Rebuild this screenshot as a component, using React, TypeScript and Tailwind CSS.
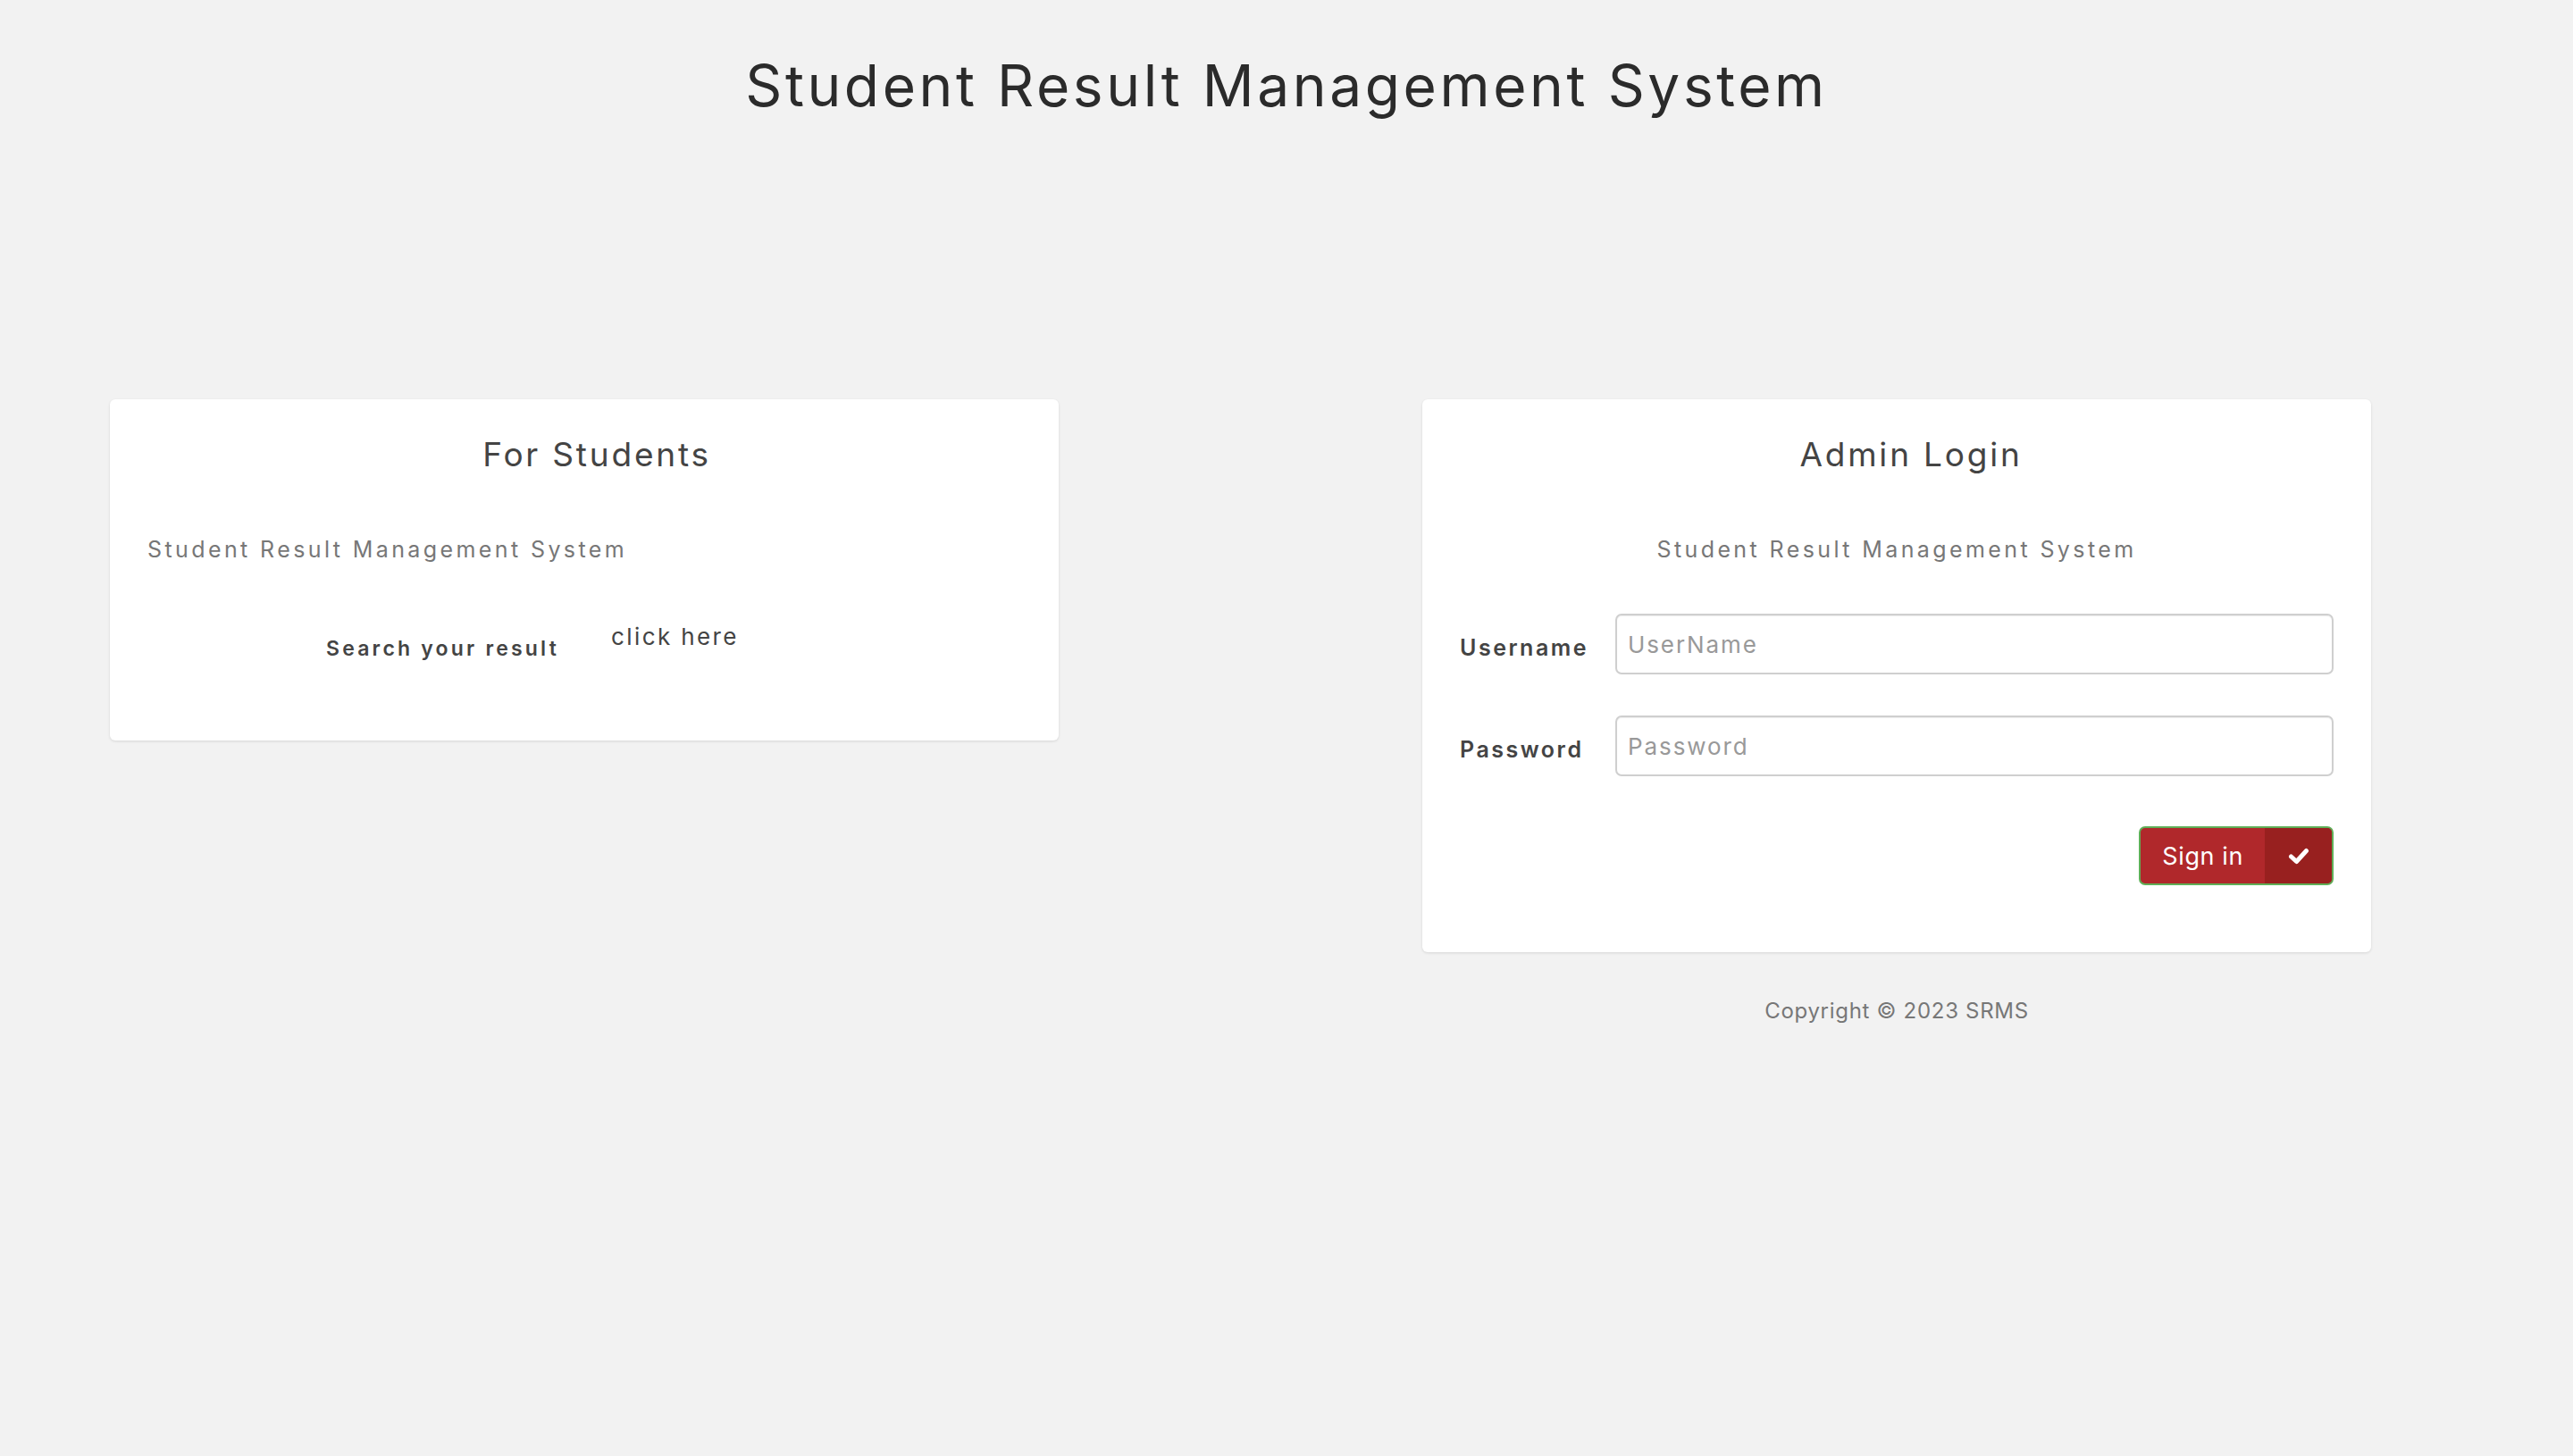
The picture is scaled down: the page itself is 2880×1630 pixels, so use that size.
import React from 'react';

const font = "font-['Inter',sans-serif]";

const CheckIcon: React.FC = () => (
    <svg width="24" height="19" viewBox="0 0 24 19" fill="none">
        <polyline
            points="3.5,10 9.5,15.5 20.5,3.5"
            stroke="white"
            strokeWidth="5"
            strokeLinecap="round"
            strokeLinejoin="round"
        />
    </svg>
);

const App: React.FC = () => {
    return (
        <div className={`min-h-screen bg-[#f2f2f2] ${font}`}>
            {/* Page title */}
            <h1 className="pt-[64px] text-center text-[64px] leading-none font-normal tracking-[3.6px] text-[#2b2b2b]">
                Student Result Management System
            </h1>

            <div className="mt-[319px] flex items-start gap-[407px] pl-[123px]">
                {/* Students card */}
                <div className="w-[1062px] rounded-[6px] bg-white px-[42px] pt-[43px] pb-[91px] shadow-[0_1px_3px_rgba(0,0,0,0.12)]">
                    <h3 className="pl-[28px] text-center text-[37px] leading-none font-normal tracking-[2.8px] text-[#444]">
                        For Students
                    </h3>
                    <p className="mt-[76px] text-[25px] leading-none tracking-[3.4px] text-[#777]">
                        Student Result Management System
                    </p>
                    <div className="mt-[72px] flex items-start">
                        <div className="mt-[15px] w-[461px] text-right text-[23px] leading-none font-semibold tracking-[3.2px] text-[#444]">
                            Search your result
                        </div>
                        <a href="#" className="ml-[58px] text-[26px] leading-none tracking-[2.4px] text-[#444]">
                            click here
                        </a>
                    </div>
                </div>

                {/* Admin column */}
                <div className="w-[1062px]">
                    <div className="rounded-[6px] bg-white px-[42px] pt-[43px] pb-[75px] shadow-[0_1px_3px_rgba(0,0,0,0.12)]">
                        <h3 className="pl-[32px] text-center text-[37px] leading-none font-normal tracking-[2.8px] text-[#444]">
                            Admin Login
                        </h3>
                        <p className="mt-[76px] text-center text-[25px] leading-none tracking-[3.4px] text-[#777]">
                            Student Result Management System
                        </p>

                        <form className="mt-[59px] flex flex-col" onSubmit={(e) => e.preventDefault()}>
                            <div className="flex items-center">
                                <label className="w-[174px] pt-[9px] text-[25px] leading-none font-semibold tracking-[2.5px] text-[#444]">
                                    Username
                                </label>
                                <input
                                    type="text"
                                    placeholder="UserName"
                                    className="h-[68px] flex-1 rounded-[7px] border-2 border-[#cfcfcf] px-[12px] text-[26px] tracking-[1.9px] text-[#555] shadow-[inset_0_1px_1px_rgba(0,0,0,0.075)] outline-none placeholder:text-[#999]"
                                />
                            </div>
                            <div className="mt-[46px] flex items-center">
                                <label className="w-[174px] pt-[9px] text-[25px] leading-none font-semibold tracking-[2.5px] text-[#444]">
                                    Password
                                </label>
                                <input
                                    type="password"
                                    placeholder="Password"
                                    className="h-[68px] flex-1 rounded-[7px] border-2 border-[#cfcfcf] px-[12px] text-[26px] tracking-[1.9px] text-[#555] shadow-[inset_0_1px_1px_rgba(0,0,0,0.075)] outline-none placeholder:text-[#999]"
                                />
                            </div>
                            <div className="mt-[56px] flex justify-end">
                                <button
                                    type="submit"
                                    className="flex h-[66px] overflow-hidden rounded-[7px] border-2 border-[#5fae57] bg-[#b0282b] text-white"
                                >
                                    <span className="flex items-center px-[24px] text-[27px] leading-none tracking-[0.6px]">Sign in</span>
                                    <span className="flex w-[75px] items-center justify-center bg-[#98201f]">
                                        <CheckIcon />
                                    </span>
                                </button>
                            </div>
                        </form>
                    </div>
                    <p className="mt-[54px] text-center text-[24px] leading-none tracking-[0.7px] text-[#777]">
                        Copyright © 2023 SRMS
                    </p>
                </div>
            </div>
        </div>
    );
};

export default App;
